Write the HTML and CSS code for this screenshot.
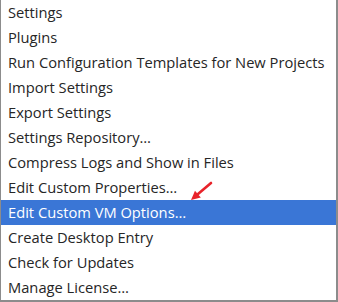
FILE: index.html
```html
<!DOCTYPE html>
<html lang="en">
<head>
  <meta charset="UTF-8" />
  <title>Menu</title>
  <link rel="stylesheet" href="styles.css">
</head>
<body>
  <div class="menu">
    <div class="item">Settings</div>
    <div class="item">Plugins</div>
    <div class="item">Run Configuration Templates for New Projects</div>
    <div class="item">Import Settings</div>
    <div class="item">Export Settings</div>
    <div class="item">Settings Repository…</div>
    <div class="item">Compress Logs and Show in Files</div>
    <div class="item">Edit Custom Properties…</div>
    <div class="item selected">
      Edit Custom VM Options…
      <svg class="arrow" width="30" height="24" viewBox="0 0 30 24">
        <path d="M23 2 L10 13" stroke="#e8232a" stroke-width="2.6" stroke-linecap="round" fill="none"/>
        <path d="M3 19 L7 9.7 L12.8 16.5 Z" fill="#e8232a"/>
      </svg>
    </div>
    <div class="item">Create Desktop Entry</div>
    <div class="item">Check for Updates</div>
    <div class="item">Manage License…</div>
  </div>
</body>
</html>
```

FILE: styles.css
```css
body {
  margin: 0;
  background: #ffffff;
  font-family: "Open Sans", "DejaVu Sans", sans-serif;
}
.menu {
  width: 338px;
  border-left: 1px solid #8c8c8c;
  border-right: 2px solid #8c8c8c;
  border-bottom: 2px solid #8c8c8c;
  box-sizing: border-box;
  background: #ffffff;
}
.item {
  position: relative;
  height: 25px;
  line-height: 25px;
  padding-left: 7px;
  font-size: 14.7px;
  color: #262626;
  white-space: nowrap;
}
.item.selected {
  background-color: #3a76d6;
  color: #ffffff;
}
.arrow {
  position: absolute;
  left: 187px;
  top: -19px;
}
```
